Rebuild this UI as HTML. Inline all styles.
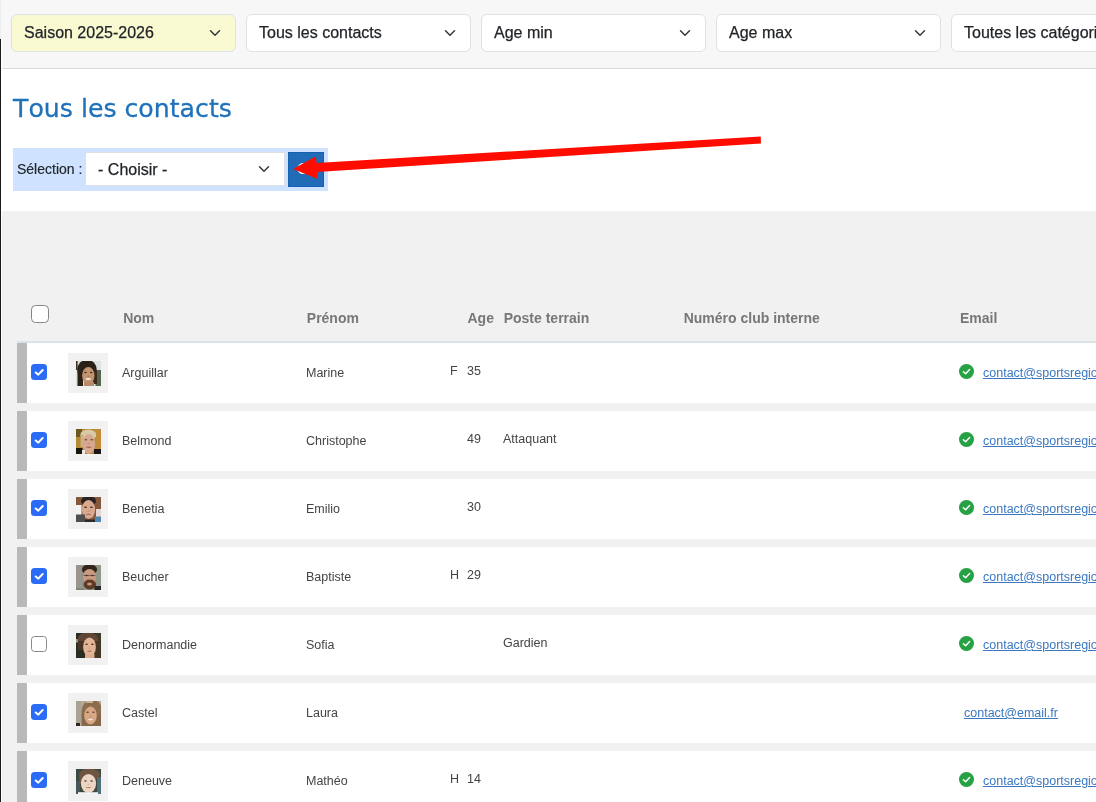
<!DOCTYPE html>
<html lang="fr">
<head>
<meta charset="utf-8">
<title>Tous les contacts</title>
<style>
*{box-sizing:border-box}
html,body{margin:0;padding:0}
body{width:1096px;height:802px;overflow:hidden;position:relative;background:#fff;font-family:"Liberation Sans",sans-serif;color:#212529}
.abs{position:absolute}
#wrap{position:absolute;left:0;top:0;width:1096px;height:802px;overflow:hidden;will-change:transform}
#topbar{left:0;top:0;width:1096px;height:69px;background:#f7f7f7;border-bottom:1px solid #dcdcdc}
#edgeL{left:0;top:0;width:1px;height:39px;background:#ececec}
#edgeW{left:1px;top:39px;width:1px;height:30px;background:#fff}
#edgeD{left:0;top:39px;width:1px;height:763px;background:#1b1b1b}
.sel{-webkit-text-stroke:0.25px #212529;position:absolute;top:14px;height:38px;width:225px;border:1px solid #dee2e6;border-radius:6px;background:#fff;font-size:16px;line-height:24px;padding:6px 36px 6px 12px;white-space:nowrap;overflow:hidden;color:#212529}
.sel svg{position:absolute;right:12px;top:12px;width:16px;height:12px}
.sel.y{background:#fafad2}
h1{font-kerning:none;position:absolute;left:13px;top:89px;-webkit-text-stroke:0.3px #1f72b9;margin:0;font-family:"DejaVu Sans","Liberation Sans",sans-serif;font-weight:normal;font-size:25.2px;line-height:40px;color:#1f72b9;white-space:nowrap;letter-spacing:0}
#selbar{left:13px;top:148px;width:315px;height:43px;background:#cfe2ff}
#selbar .lbl{-webkit-text-stroke:0.15px #212529;position:absolute;left:4px;top:11px;font-size:14px;line-height:20px;color:#212529;white-space:nowrap}
#selbar .sel2{-webkit-text-stroke:0.25px #212529;position:absolute;left:72px;top:4px;width:200px;height:34px;background:#fff;border:1px solid #dce0e5;font-size:16px;line-height:22px;padding:5.5px 0 0 12.1px;white-space:nowrap}
#selbar .sel2 svg{position:absolute;right:12px;top:10px;width:16px;height:12px}
#selbar .btn{position:absolute;left:275px;top:4px;width:36px;height:35px;background:#216bb7;border:1px solid #1261b3}
#grey{left:2px;top:211px;width:1094px;height:591px;background:#f1f1f1}
.th{position:absolute;top:308px;font-size:14px;font-weight:bold;line-height:20px;color:#777;white-space:nowrap}
#hline{left:17px;top:341px;width:1079px;height:2px;background:#dde2e8}
.row{position:absolute;left:17px;width:1079px;height:60px;background:#fff}
.row .bar{position:absolute;left:0;top:0;width:10px;height:60px;background:#b9b9b9}
.row .av{position:absolute;left:51px;top:10px;width:40px;height:40px;background:#f1f1f1}
.row .av svg{position:absolute;left:7.5px;top:8px;width:25px;height:25px;display:block}
.row span{position:absolute;font-size:12.5px;line-height:18px;color:#444;white-space:nowrap}
.row .nm{left:105px;top:21px}
.row .pn{left:289px;top:21px}
.row .gd{left:433px;top:19px}
.row .ag{left:450px;top:19px}
.row .po{left:486px;top:19px}
.row a{position:absolute;top:21px;font-size:12.5px;line-height:18px;color:#3b78c2;text-decoration:underline;white-space:nowrap}
.row .ok{position:absolute;left:942px;top:21px;width:15px;height:15px}
.cb{position:absolute;left:14px;top:21px;width:16px;height:16px;border-radius:3.5px}
.cb.on{background:#2a6cf5}
.cb.off{background:#fff;border:1px solid #8a8a8a}
.cb svg{position:absolute;left:0;top:0;width:16px;height:16px}
#cball{left:31px;top:305px;width:18px;height:18px;border:1px solid #858585;border-radius:4.5px;background:#fff}
#arrow{left:0;top:0;width:1096px;height:802px;pointer-events:none}
</style>
</head>
<body>
<div id="wrap">
<div id="topbar" class="abs"></div>
<div id="edgeL" class="abs"></div>
<div id="edgeW" class="abs"></div>

<div class="sel y" style="left:11px">Saison 2025-2026<svg viewBox="0 0 16 12"><path d="M3.5 3.75 8 8.25l4.5-4.5" fill="none" stroke="#343a40" stroke-width="1.5" stroke-linecap="round" stroke-linejoin="round"/></svg></div>
<div class="sel" style="left:246px">Tous les contacts<svg viewBox="0 0 16 12"><path d="M3.5 3.75 8 8.25l4.5-4.5" fill="none" stroke="#343a40" stroke-width="1.5" stroke-linecap="round" stroke-linejoin="round"/></svg></div>
<div class="sel" style="left:481px">Age min<svg viewBox="0 0 16 12"><path d="M3.5 3.75 8 8.25l4.5-4.5" fill="none" stroke="#343a40" stroke-width="1.5" stroke-linecap="round" stroke-linejoin="round"/></svg></div>
<div class="sel" style="left:716px">Age max<svg viewBox="0 0 16 12"><path d="M3.5 3.75 8 8.25l4.5-4.5" fill="none" stroke="#343a40" stroke-width="1.5" stroke-linecap="round" stroke-linejoin="round"/></svg></div>
<div class="sel" style="left:951px">Toutes les catégories</div>

<h1>Tous les contacts</h1>

<div id="selbar" class="abs">
  <span class="lbl">Sélection :</span>
  <div class="sel2">- Choisir -<svg viewBox="0 0 16 12"><path d="M3.5 3.75 8 8.25l4.5-4.5" fill="none" stroke="#343a40" stroke-width="1.5" stroke-linecap="round" stroke-linejoin="round"/></svg></div>
  <div class="btn"></div>
</div>

<div id="grey" class="abs"></div>
<div id="edgeD" class="abs"></div>

<div id="cball" class="abs"></div>
<div class="th" style="left:123.2px">Nom</div>
<div class="th" style="left:306.8px">Prénom</div>
<div class="th" style="left:467.5px">Age</div>
<div class="th" style="left:503.7px">Poste terrain</div>
<div class="th" style="left:683.7px">Numéro club interne</div>
<div class="th" style="left:960px">Email</div>
<div id="hline" class="abs"></div>

<!--ROWS-->
<div class="row" style="top:343px"><div class="bar"></div><div class="cb on"><svg viewBox="0 0 16 16"><path d="M4.7 8.5 7.3 10.6 11.7 6" fill="none" stroke="#fff" stroke-width="2" stroke-linecap="round" stroke-linejoin="round"/></svg></div><div class="av"><svg viewBox="0 0 25 25"><defs><filter id="b0" x="-20%" y="-20%" width="140%" height="140%"><feGaussianBlur stdDeviation="0.55"/></filter><clipPath id="c0"><rect width="25" height="25"/></clipPath></defs><g clip-path="url(#c0)"><g filter="url(#b0)"><rect x="-4" y="-4" width="33" height="33" fill="#dde2df"/><rect x="19.5" y="9" width="9" height="20" fill="#56654f"/><rect x="-3" y="-3" width="4.6" height="12" fill="#3a332b"/><ellipse cx="11" cy="9" rx="9.8" ry="10.5" fill="#2a2119"/><rect x="1.5" y="10" width="5.5" height="19" fill="#2a2119"/><rect x="16.5" y="10" width="4.5" height="13" fill="#3a2a1e"/><ellipse cx="12.3" cy="14.5" rx="6.2" ry="8.4" fill="#c4946f"/><rect x="8" y="21" width="10" height="8" fill="#b98a68"/><ellipse cx="9.4" cy="11.6" rx="1.4" ry="0.75" fill="#4a2e20"/><ellipse cx="15.200000000000001" cy="11.6" rx="1.4" ry="0.75" fill="#4a2e20"/><ellipse cx="12.3" cy="15.2" rx="1.1" ry="0.6" fill="#a87858"/><ellipse cx="12.3" cy="18" rx="2.8" ry="0.9" fill="#f4eae2"/></g></g></svg></div><span class="nm">Arguillar</span><span class="pn">Marine</span><span class="gd">F</span><span class="ag">35</span><svg class="ok" viewBox="0 0 15 15"><circle cx="7.5" cy="7.5" r="7.5" fill="#26a144"/><path d="M4.4 7.8 6.6 9.8 10.6 5.6" fill="none" stroke="#fff" stroke-width="1.5" stroke-linecap="round" stroke-linejoin="round"/></svg><a style="left:966px">contact@sportsregions.fr</a></div>
<div class="row" style="top:411px"><div class="bar"></div><div class="cb on"><svg viewBox="0 0 16 16"><path d="M4.7 8.5 7.3 10.6 11.7 6" fill="none" stroke="#fff" stroke-width="2" stroke-linecap="round" stroke-linejoin="round"/></svg></div><div class="av"><svg viewBox="0 0 25 25"><defs><filter id="b1" x="-20%" y="-20%" width="140%" height="140%"><feGaussianBlur stdDeviation="0.55"/></filter><clipPath id="c1"><rect width="25" height="25"/></clipPath></defs><g clip-path="url(#c1)"><g filter="url(#b1)"><rect x="-4" y="-4" width="33" height="33" fill="#b58a36"/><rect x="-3" y="-3" width="9" height="11" fill="#6b5a20"/><rect x="19" y="-3" width="9" height="23" fill="#c28d3a"/><ellipse cx="12.3" cy="6" rx="8" ry="5.5" fill="#d9c9a5"/><rect x="4.5" y="6" width="3" height="12" fill="#c9b27f"/><ellipse cx="12.8" cy="15" rx="6.3" ry="10" fill="#d8a78f"/><rect x="-3" y="19" width="9.5" height="9" fill="#15130f"/><rect x="18" y="20" width="10" height="9" fill="#1a1712"/><rect x="6" y="21" width="3" height="8" fill="#efe6e0"/><ellipse cx="9.9" cy="10.8" rx="1.4" ry="0.75" fill="#6d4a42"/><ellipse cx="15.700000000000001" cy="10.8" rx="1.4" ry="0.75" fill="#6d4a42"/><ellipse cx="12.8" cy="14.5" rx="1.1" ry="0.6" fill="#c08a78"/><ellipse cx="12.8" cy="18.3" rx="2.8" ry="0.7" fill="#a06a62"/></g></g></svg></div><span class="nm">Belmond</span><span class="pn">Christophe</span><span class="ag">49</span><span class="po">Attaquant</span><svg class="ok" viewBox="0 0 15 15"><circle cx="7.5" cy="7.5" r="7.5" fill="#26a144"/><path d="M4.4 7.8 6.6 9.8 10.6 5.6" fill="none" stroke="#fff" stroke-width="1.5" stroke-linecap="round" stroke-linejoin="round"/></svg><a style="left:966px">contact@sportsregions.fr</a></div>
<div class="row" style="top:479px"><div class="bar"></div><div class="cb on"><svg viewBox="0 0 16 16"><path d="M4.7 8.5 7.3 10.6 11.7 6" fill="none" stroke="#fff" stroke-width="2" stroke-linecap="round" stroke-linejoin="round"/></svg></div><div class="av"><svg viewBox="0 0 25 25"><defs><filter id="b2" x="-20%" y="-20%" width="140%" height="140%"><feGaussianBlur stdDeviation="0.55"/></filter><clipPath id="c2"><rect width="25" height="25"/></clipPath></defs><g clip-path="url(#c2)"><g filter="url(#b2)"><rect x="-4" y="-4" width="33" height="33" fill="#86583a"/><rect x="-3" y="8" width="8.5" height="10" fill="#f2f2f2"/><rect x="20" y="12" width="8" height="8" fill="#e8d5d0"/><ellipse cx="12.5" cy="4" rx="7.5" ry="5" fill="#2b2422"/><ellipse cx="12.5" cy="12.5" rx="6.6" ry="9.5" fill="#d9a98f"/><rect x="-3" y="17.5" width="12" height="11" fill="#50504f"/><rect x="19" y="19.5" width="9" height="9" fill="#4f86b0"/><rect x="9" y="22.5" width="10" height="6" fill="#2a2a2c"/><ellipse cx="9.6" cy="10.2" rx="1.4" ry="0.75" fill="#3a2620"/><ellipse cx="15.4" cy="10.2" rx="1.4" ry="0.75" fill="#3a2620"/><ellipse cx="12.5" cy="14" rx="1.1" ry="0.6" fill="#bb8a74"/><ellipse cx="12.5" cy="17.4" rx="2.6" ry="0.7" fill="#a06e64"/></g></g></svg></div><span class="nm">Benetia</span><span class="pn">Emilio</span><span class="ag">30</span><svg class="ok" viewBox="0 0 15 15"><circle cx="7.5" cy="7.5" r="7.5" fill="#26a144"/><path d="M4.4 7.8 6.6 9.8 10.6 5.6" fill="none" stroke="#fff" stroke-width="1.5" stroke-linecap="round" stroke-linejoin="round"/></svg><a style="left:966px">contact@sportsregions.fr</a></div>
<div class="row" style="top:547px"><div class="bar"></div><div class="cb on"><svg viewBox="0 0 16 16"><path d="M4.7 8.5 7.3 10.6 11.7 6" fill="none" stroke="#fff" stroke-width="2" stroke-linecap="round" stroke-linejoin="round"/></svg></div><div class="av"><svg viewBox="0 0 25 25"><defs><filter id="b3" x="-20%" y="-20%" width="140%" height="140%"><feGaussianBlur stdDeviation="0.55"/></filter><clipPath id="c3"><rect width="25" height="25"/></clipPath></defs><g clip-path="url(#c3)"><g filter="url(#b3)"><rect x="-4" y="-4" width="33" height="33" fill="#8f968a"/><rect x="-3" y="-3" width="8.5" height="31" fill="#9a948c"/><ellipse cx="13.5" cy="4.5" rx="7.6" ry="5.2" fill="#33251b"/><ellipse cx="13.5" cy="12" rx="6.6" ry="8" fill="#c99a80"/><ellipse cx="13.8" cy="19.5" rx="6.2" ry="5" fill="#5d3a26"/><ellipse cx="13.5" cy="19" rx="2.4" ry="1.5" fill="#c9957a"/><rect x="7.5" y="10" width="12" height="0.9" fill="#6b5650"/><ellipse cx="10.6" cy="10.6" rx="1.4" ry="0.75" fill="#4a342c"/><ellipse cx="16.4" cy="10.6" rx="1.4" ry="0.75" fill="#4a342c"/><ellipse cx="13.5" cy="14.3" rx="1.1" ry="0.6" fill="#b08268"/><rect x="18.5" y="21" width="10" height="8" fill="#262825"/><rect x="-3" y="23" width="11" height="6" fill="#7d847a"/></g></g></svg></div><span class="nm">Beucher</span><span class="pn">Baptiste</span><span class="gd">H</span><span class="ag">29</span><svg class="ok" viewBox="0 0 15 15"><circle cx="7.5" cy="7.5" r="7.5" fill="#26a144"/><path d="M4.4 7.8 6.6 9.8 10.6 5.6" fill="none" stroke="#fff" stroke-width="1.5" stroke-linecap="round" stroke-linejoin="round"/></svg><a style="left:966px">contact@sportsregions.fr</a></div>
<div class="row" style="top:615px"><div class="bar"></div><div class="cb off"></div><div class="av"><svg viewBox="0 0 25 25"><defs><filter id="b4" x="-20%" y="-20%" width="140%" height="140%"><feGaussianBlur stdDeviation="0.55"/></filter><clipPath id="c4"><rect width="25" height="25"/></clipPath></defs><g clip-path="url(#c4)"><g filter="url(#b4)"><rect x="-4" y="-4" width="33" height="33" fill="#2a2e20"/><rect x="-3" y="6" width="6" height="3.5" fill="#9aa890"/><rect x="20" y="-3" width="8" height="31" fill="#3a3a25"/><ellipse cx="12" cy="7" rx="10.5" ry="8" fill="#5e4534"/><rect x="2" y="8" width="6" height="9" fill="#4a3528"/><rect x="18.5" y="8" width="4.5" height="20" fill="#4a3426"/><ellipse cx="13.5" cy="14" rx="6.4" ry="9.5" fill="#e2b596"/><rect x="9" y="21" width="9.5" height="8" fill="#dcae8f"/><ellipse cx="10.6" cy="11.2" rx="1.4" ry="0.75" fill="#4d3428"/><ellipse cx="16.4" cy="11.2" rx="1.4" ry="0.75" fill="#4d3428"/><ellipse cx="13.5" cy="15" rx="1.1" ry="0.6" fill="#c6967a"/><ellipse cx="13.5" cy="18.3" rx="2.4" ry="0.7" fill="#b07466"/></g></g></svg></div><span class="nm">Denormandie</span><span class="pn">Sofia</span><span class="po">Gardien</span><svg class="ok" viewBox="0 0 15 15"><circle cx="7.5" cy="7.5" r="7.5" fill="#26a144"/><path d="M4.4 7.8 6.6 9.8 10.6 5.6" fill="none" stroke="#fff" stroke-width="1.5" stroke-linecap="round" stroke-linejoin="round"/></svg><a style="left:966px">contact@sportsregions.fr</a></div>
<div class="row" style="top:683px"><div class="bar"></div><div class="cb on"><svg viewBox="0 0 16 16"><path d="M4.7 8.5 7.3 10.6 11.7 6" fill="none" stroke="#fff" stroke-width="2" stroke-linecap="round" stroke-linejoin="round"/></svg></div><div class="av"><svg viewBox="0 0 25 25"><defs><filter id="b5" x="-20%" y="-20%" width="140%" height="140%"><feGaussianBlur stdDeviation="0.55"/></filter><clipPath id="c5"><rect width="25" height="25"/></clipPath></defs><g clip-path="url(#c5)"><g filter="url(#b5)"><rect x="-4" y="-4" width="33" height="33" fill="#b5aa9a"/><rect x="-3" y="-3" width="8" height="25" fill="#aaa294"/><ellipse cx="16" cy="11" rx="10.5" ry="12.5" fill="#8c6d4d"/><rect x="5.5" y="13" width="23" height="16" fill="#86674a"/><rect x="10" y="-2" width="7" height="4" fill="#c9b090"/><ellipse cx="14.5" cy="14.5" rx="6.3" ry="9" fill="#d8a786"/><rect x="-3" y="22" width="7" height="7" fill="#2e2822"/><ellipse cx="11.6" cy="11.2" rx="1.4" ry="0.75" fill="#6a4836"/><ellipse cx="17.4" cy="11.2" rx="1.4" ry="0.75" fill="#6a4836"/><ellipse cx="14.5" cy="15.2" rx="1.1" ry="0.6" fill="#be8c6e"/><ellipse cx="14.5" cy="18.6" rx="2.6" ry="0.8" fill="#f2e6de"/></g></g></svg></div><span class="nm">Castel</span><span class="pn">Laura</span><a style="left:947px">contact@email.fr</a></div>
<div class="row" style="top:751px"><div class="bar"></div><div class="cb on"><svg viewBox="0 0 16 16"><path d="M4.7 8.5 7.3 10.6 11.7 6" fill="none" stroke="#fff" stroke-width="2" stroke-linecap="round" stroke-linejoin="round"/></svg></div><div class="av"><svg viewBox="0 0 25 25"><defs><filter id="b6" x="-20%" y="-20%" width="140%" height="140%"><feGaussianBlur stdDeviation="0.55"/></filter><clipPath id="c6"><rect width="25" height="25"/></clipPath></defs><g clip-path="url(#c6)"><g filter="url(#b6)"><rect x="-4" y="-4" width="33" height="33" fill="#3c4a40"/><rect x="21" y="8" width="7" height="21" fill="#4f7078"/><rect x="-3" y="12" width="7" height="16" fill="#46585a"/><ellipse cx="13.5" cy="5.5" rx="10.5" ry="6" fill="#6e5443"/><rect x="3.5" y="5" width="4" height="9" fill="#6e5443"/><ellipse cx="12.5" cy="14.5" rx="7.6" ry="9.5" fill="#edd5c3"/><rect x="2" y="23.2" width="20" height="5" fill="#f4f4f4"/><ellipse cx="9.4" cy="12" rx="1.4" ry="0.75" fill="#5e4438"/><ellipse cx="15.6" cy="12" rx="1.4" ry="0.75" fill="#5e4438"/><ellipse cx="12.5" cy="15.6" rx="1.1" ry="0.6" fill="#d8b4a0"/><ellipse cx="12.5" cy="18.6" rx="3" ry="0.7" fill="#b87c70"/></g></g></svg></div><span class="nm">Deneuve</span><span class="pn">Mathéo</span><span class="gd">H</span><span class="ag">14</span><svg class="ok" viewBox="0 0 15 15"><circle cx="7.5" cy="7.5" r="7.5" fill="#26a144"/><path d="M4.4 7.8 6.6 9.8 10.6 5.6" fill="none" stroke="#fff" stroke-width="1.5" stroke-linecap="round" stroke-linejoin="round"/></svg><a style="left:966px">contact@sportsregions.fr</a></div>
<!--/ROWS-->

<svg id="arrow" class="abs" viewBox="0 0 1096 802">
  <circle cx="302.9" cy="168.6" r="4.6" fill="none" stroke="#fff" stroke-width="1.8"/>
  <polygon points="293.1,169 316,156.3 316.5,163 760.7,136.4 761,143.5 317,171.9 317.2,178.7" fill="#ff0c00"/>
</svg>
</div>
</body>
</html>
